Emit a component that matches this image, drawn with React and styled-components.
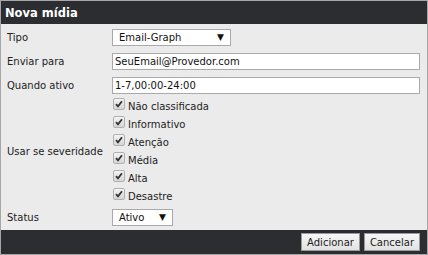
import styled, { createGlobalStyle } from "styled-components";

const GlobalStyle = createGlobalStyle`
  html, body {
    margin: 0;
    padding: 0;
    background: #ebebeb;
  }
`;

const Dialog = styled.div`
  width: 428px;
  height: 255px;
  box-sizing: border-box;
  border: 1px solid #a6a6a6;
  display: flex;
  flex-direction: column;
  font-family: "DejaVu Sans", Verdana, sans-serif;
  font-size: 10px;
  color: #222;
  background: #ebebeb;
`;

const Header = styled.div`
  height: 23px;
  flex-shrink: 0;
  background: #2c2d31;
  color: #fff;
  font-weight: bold;
  font-size: 11.5px;
  display: flex;
  align-items: center;
  padding-left: 4px;
`;

const Body = styled.div`
  flex: 1;
  min-height: 0;
  padding: 1px 7px 0 6px;
`;

const Row = styled.div`
  display: grid;
  grid-template-columns: 105px 1fr;
  align-items: center;
  min-height: 24px;
`;

const Label = styled.div`
  color: #222;
  white-space: nowrap;
`;

const Select = styled.div`
  width: ${(p) => p.$width}px;
  height: 17px;
  box-sizing: border-box;
  border: 1px solid #a9a9a9;
  background: #fff;
  display: flex;
  align-items: center;
  justify-content: space-between;
  padding: 0 6px 0 6px;
  color: #111;
`;

const Arrow = styled.span`
  font-size: 9px;
  color: #111;
`;

const Input = styled.div`
  height: 17px;
  box-sizing: border-box;
  border: 1px solid #a9a9a9;
  background: #fff;
  display: flex;
  align-items: center;
  padding-left: 2px;
  color: #111;
`;

const CheckList = styled.div`
  display: flex;
  flex-direction: column;
`;

const CheckItem = styled.label`
  display: flex;
  align-items: center;
  height: 18px;
  gap: 3px;
`;

const Box = styled.span`
  width: 12px;
  height: 12px;
  box-sizing: border-box;
  border: 1px solid #b0b0b0;
  border-radius: 2px;
  background: linear-gradient(#f4f4f4, #d6d6d6);
  display: flex;
  align-items: center;
  justify-content: center;
  margin-left: 1px;
  margin-top: -4px;
`;

const Footer = styled.div`
  height: 24px;
  flex-shrink: 0;
  background: #2c2d31;
  display: flex;
  justify-content: flex-end;
  align-items: center;
  gap: 4px;
  padding-right: 7px;
`;

const Button = styled.button`
  height: 18px;
  padding: 0 5px;
  font-family: "DejaVu Sans", Verdana, sans-serif;
  font-size: 10px;
  color: #222;
  background: linear-gradient(#f6f6f6, #e2e2e2);
  border: 1px solid #9a9a9a;
  border-radius: 0;
`;

const severities = [
  "Não classificada",
  "Informativo",
  "Atenção",
  "Média",
  "Alta",
  "Desastre",
];

function Check() {
  return (
    <Box>
      <svg width="8" height="8" viewBox="0 0 8 8">
        <path d="M1 4.2 L3 6.4 L7 1.2" fill="none" stroke="#333" strokeWidth="1.8" />
      </svg>
    </Box>
  );
}

export default function App() {
  return (
    <>
      <GlobalStyle />
      <Dialog>
        <Header>Nova mídia</Header>
        <Body>
          <Row>
            <Label>Tipo</Label>
            <Select $width={119}>
              Email-Graph <Arrow>▼</Arrow>
            </Select>
          </Row>
          <Row>
            <Label>Enviar para</Label>
            <Input>SeuEmail@Provedor.com</Input>
          </Row>
          <Row>
            <Label>Quando ativo</Label>
            <Input>1-7,00:00-24:00</Input>
          </Row>
          <Row>
            <Label>Usar se severidade</Label>
            <CheckList>
              {severities.map((s) => (
                <CheckItem key={s}>
                  <Check />
                  {s}
                </CheckItem>
              ))}
            </CheckList>
          </Row>
          <Row>
            <Label>Status</Label>
            <Select $width={61}>
              Ativo <Arrow>▼</Arrow>
            </Select>
          </Row>
        </Body>
        <Footer>
          <Button>Adicionar</Button>
          <Button>Cancelar</Button>
        </Footer>
      </Dialog>
    </>
  );
}
